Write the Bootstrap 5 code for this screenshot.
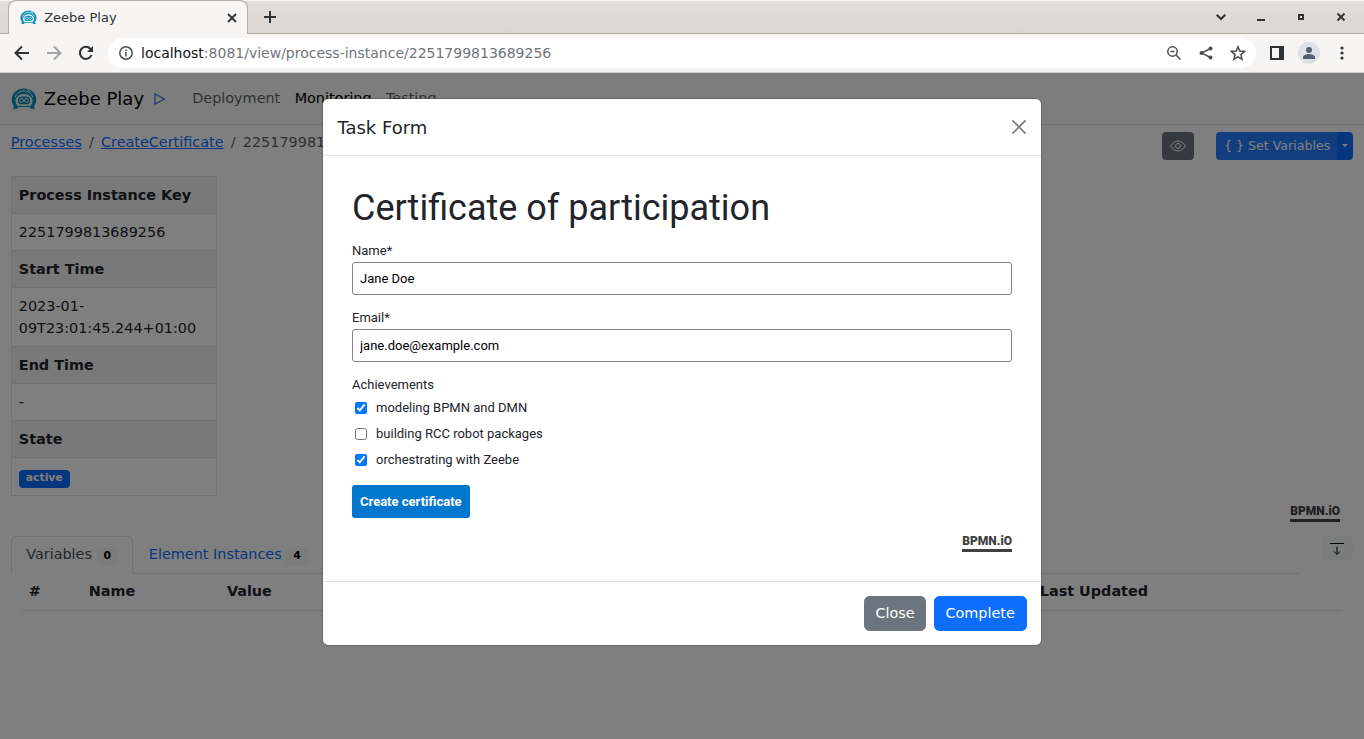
<!DOCTYPE html>
<html lang="en">
<head>
<meta charset="utf-8">
<meta name="viewport" content="width=device-width, initial-scale=1">
<title>Zeebe Play</title>
<link href="https://cdn.jsdelivr.net/npm/bootstrap@5.3.0/dist/css/bootstrap.min.css" rel="stylesheet">
<style>
  html { font-size: 90%; }
  body { font-family: "DejaVu Sans", sans-serif; min-height: 100vh; display: flex; flex-direction: column; }
  svg { display: block; flex: none; }
  .bare { border: 0; background: none; padding: 0; color: inherit; }

  /* browser frame */
  .tabstrip { height: 34px; background: linear-gradient(#e1dedb, #dad6d2); border-top: 1px solid #f6f5f4; border-bottom: 1px solid #b0aca8; padding: 0 18px 0 8px; color: #2e3436; }
  .tabitem { width: 240px; height: 34px; background: #f6f5f4; border: 1px solid #b0aca8; border-bottom: 0; border-radius: 8px 8px 0 0; padding: 0 10px 0 11px; font-size: 13px; }
  .new-tab { margin-left: 16px; }
  .window-tools { gap: 30px; }
  .toolbar { height: 39px; background: #f6f5f4; border-bottom: 1px solid #d5cfca; padding: 0 14px; gap: 14px; color: #2e3436; }
  .history-tools { gap: 16px; }
  .omnibox { height: 30px; background: #fff; border-radius: 15px; padding: 0 10px 0 11px; gap: 16px; color: #4a4d4f; }
  .address { font-size: 14px; color: #70757a; margin-left: -8px; }
  .address span { color: #111; }
  .person { width: 22px; height: 22px; border-radius: 50%; background: #dee1e6; color: #565e72; }

  /* application */
  .page-area { position: relative; flex: 1; overflow: hidden; }
  .navbar-play { height: 52px; padding: 0; background: #f8fbf9; border-bottom: 1px solid #dee2e6; }
  .navbar-brand { gap: 7px; }
  .facts { line-height: 22px; }
  .facts th, .facts td { padding: 7px; }
  .facts th { background: #f2f2f2; }
  .badge { --bs-badge-border-radius: 4px; }
  .set-vars { background: #257bff; border-color: #257bff; padding-left: 7px; padding-right: 7px; }
  .set-vars + .btn { padding-left: 4px; padding-right: 4px; }
  .badge-soft { background: #f6fbf9; color: #000; }
  .page-tabs { margin-right: 54px; }
  .page-tabs .nav-link.active { color: #495057; }
  .bpmn { font: 900 12px/16px "Roboto", sans-serif; color: #404040; border-bottom: 3px solid #404040; text-decoration: none; }
  .bpmn:hover { color: #000; }
  .canvas-logo { padding-right: 24px; }
  .instance-row { height: 376px; padding-top: 16px; }
  .layer { position: absolute; inset: 0; background: rgba(0, 0, 0, .5); }
  .modal-task { position: absolute; }
  .modal-task .modal-dialog { max-width: 720px; }
  .modal-task .modal-content { border-radius: 6px; }

  /* form */
  .task-form { font-family: "Roboto", sans-serif; font-size: 13px; color: #22242a; padding: 30px 29px 29px; }
  .task-form h1 { font-size: 36px; font-weight: 400; line-height: 44px; margin: 0 0 12px; }
  .task-form label, .task-form legend { display: block; font-size: 13px; line-height: 18px; margin: 0; }
  .task-form input[type=text], .task-form input[type=email] { display: block; width: 100%; height: 33px; border: 1px solid #80828f; border-radius: 3px; padding: 0 7px; color: #000; margin: 2px 0 14px; }
  .task-form input[type=checkbox] { width: 12px; height: 12px; margin: 0; }
  .task-form legend { padding-bottom: 1px; }
  .tick { height: 26px; padding-left: 3px; gap: 9px; }
  .submit { background: #0277d0; color: #fff; border: 0; border-radius: 3px; height: 33px; padding: 0 8px; margin: 12px 0 15px; font-weight: 700; }
</style>
</head>
<body>
<svg width="0" height="0" class="position-absolute" aria-hidden="true">
  <symbol id="robot" viewBox="0 0 26 22">
    <path fill="#0f8fb8" d="M3 18C-.5 13.500-.2 7.500 4.500 3.500 9-.6 17-.6 21.500 3.500 26.200 7.500 26.500 13.500 23 18l1 3H2z"/>
    <path fill="none" stroke="#e8f6fa" stroke-width="1" d="M4 9.500C5.500 5 9 3 13 3s7.500 2 9 6.500M16.500 1.500l3 2.500"/>
    <path fill="#e8f6fa" d="M4.500 12.500C5 8.500 8.500 6 13 6s8 2.500 8.500 6.500c.2 2-1 4.500-2.500 5.500H7c-1.500-1-2.700-3.500-2.500-5.500z"/>
    <rect x="6.800" y="8.500" width="12.400" height="7.800" rx="3.900" fill="#0f8fb8"/>
    <path fill="none" stroke="#e8f6fa" stroke-width=".9" d="M8.400 12.400a2 2 0 104 0 2 2 0 10-4 0M13.600 12.400a2 2 0 104 0 2 2 0 10-4 0M12.400 12.400h1.200"/>
    <path fill="#e8f6fa" d="M5.500 21l2-2h11l2 2z"/>
  </symbol>
</svg>

<header>
  <div class="tabstrip d-flex align-items-center">
    <div class="tabitem d-flex align-items-center">
      <svg width="17" height="15"><use href="#robot"/></svg>
      <span class="ms-2 flex-grow-1">Zeebe Play</span>
      <button class="bare" aria-label="Close tab"><svg width="10" height="10" viewBox="0 0 10 10" stroke="currentColor" stroke-width="1.800"><path d="M1 1l8 8M9 1l-8 8"/></svg></button>
    </div>
    <button class="bare new-tab me-auto" aria-label="New tab"><svg width="12" height="12" viewBox="0 0 12 12" stroke="currentColor" stroke-width="2"><path d="M6 0v12M0 6h12"/></svg></button>
    <div class="window-tools d-flex align-items-center">
      <button class="bare" aria-label="Search tabs"><svg width="10" height="10" viewBox="0 0 10 10" fill="none" stroke="currentColor" stroke-width="2"><path d="M.700 2.700L5 7l4.300-4.300"/></svg></button>
      <button class="bare" aria-label="Minimize"><svg width="10" height="10" viewBox="0 0 10 10"><path d="M1 7h8v2H1z" fill="currentColor"/></svg></button>
      <button class="bare" aria-label="Maximize"><svg width="10" height="10" viewBox="0 0 10 10" fill="none" stroke="currentColor" stroke-width="2"><path d="M3 3h4v4H3z"/></svg></button>
      <button class="bare" aria-label="Close window"><svg width="10" height="10" viewBox="0 0 10 10" stroke="currentColor" stroke-width="2"><path d="M1.500 1.500l7 7M8.500 1.500l-7 7"/></svg></button>
    </div>
  </div>
  <div class="toolbar d-flex align-items-center">
    <div class="history-tools d-flex">
      <button class="bare" aria-label="Back"><svg width="16" height="16" viewBox="0 0 16 16" fill="none" stroke="currentColor" stroke-width="2"><path d="M15 8H2M8 1.500L1.500 8 8 14.500"/></svg></button>
      <button class="bare" aria-label="Forward" disabled><svg width="16" height="16" viewBox="0 0 16 16" fill="none" stroke="#a3a6a6" stroke-width="2"><path d="M1 8h13M8 1.500L14.500 8 8 14.500"/></svg></button>
      <button class="bare" aria-label="Reload"><svg width="16" height="16" viewBox="0 0 16 16" fill="none" stroke="currentColor" stroke-width="2"><path d="M13.500 10A6 6 0 1112.300 3.800L14 5.500"/><path d="M15 1v6H9z" fill="currentColor" stroke="none"/></svg></button>
    </div>
    <div class="omnibox d-flex align-items-center flex-grow-1">
      <svg width="14" height="14" viewBox="0 0 14 14" fill="none" stroke="currentColor" stroke-width="1.500"><circle cx="7" cy="7" r="6.200"/><path d="M7 6v4.500M7 3.500V5"/></svg>
      <a class="address text-decoration-none me-auto" href="#"><span>localhost</span>:8081/view/process-instance/2251799813689256</a>
      <button class="bare" aria-label="Zoom"><svg width="16" height="16" viewBox="0 0 16 16" fill="none" stroke="currentColor" stroke-width="1.500"><circle cx="6.500" cy="6.500" r="4.700"/><path d="M10 10l4.500 4.500M4.500 6.500h4"/></svg></button>
      <button class="bare" aria-label="Share"><svg width="16" height="16" viewBox="0 0 16 16" fill="currentColor"><circle cx="12.500" cy="3.500" r="2"/><circle cx="3.500" cy="8" r="2"/><circle cx="12.500" cy="12.500" r="2"/><path d="M12.500 3.500L3.500 8l9 4.500" fill="none" stroke="currentColor" stroke-width="1.400"/></svg></button>
      <button class="bare" aria-label="Bookmark"><svg width="16" height="16" viewBox="0 0 16 16" fill="none" stroke="currentColor" stroke-width="1.500"><path d="M8 1.800l1.800 4.300 4.700.4-3.600 3.100 1.100 4.600L8 11.800l-4 2.400 1.100-4.600L1.500 6.500l4.700-.4z"/></svg></button>
    </div>
    <button class="bare" aria-label="Side panel"><svg width="14" height="14" viewBox="0 0 14 14"><path fill="currentColor" fill-rule="evenodd" d="M0 0h14v14H0zM2 2v10h7V2z"/></svg></button>
    <button class="bare person" aria-label="Profile"><svg width="22" height="22" viewBox="0 0 22 22" fill="currentColor"><circle cx="11" cy="8" r="3"/><path d="M5 17v-2c0-2 4-3 6-3s6 1 6 3v2z"/></svg></button>
    <button class="bare" aria-label="Menu"><svg width="16" height="14" viewBox="0 0 16 14" fill="currentColor"><circle cx="8" cy="2" r="1.600"/><circle cx="8" cy="7" r="1.600"/><circle cx="8" cy="12" r="1.600"/></svg></button>
  </div>
</header>

<div class="page-area">
  <nav class="navbar navbar-expand navbar-play">
    <div class="container-fluid">
      <a class="navbar-brand d-flex align-items-center" href="#">
        <svg width="26" height="22"><use href="#robot"/></svg>
        <span>Zeebe Play</span>
        <svg width="16" height="14" viewBox="0 0 16 14" fill="none" stroke="#4169e1" stroke-width="1.200"><path d="M4 2v10l9.500-5z"/></svg>
      </a>
      <ul class="navbar-nav me-auto ms-1">
        <li class="nav-item"><a class="nav-link" href="#">Deployment</a></li>
        <li class="nav-item"><a class="nav-link active" href="#">Monitoring</a></li>
        <li class="nav-item"><a class="nav-link" href="#">Testing</a></li>
      </ul>
    </div>
  </nav>

  <main class="container-fluid">
    <div class="d-flex justify-content-between pt-2">
      <nav aria-label="breadcrumb">
        <ol class="breadcrumb mb-0">
          <li class="breadcrumb-item"><a href="#">Processes</a></li>
          <li class="breadcrumb-item"><a href="#">CreateCertificate</a></li>
          <li class="breadcrumb-item active">2251799813689256</li>
        </ol>
      </nav>
      <div class="d-flex">
        <button class="btn btn-sm btn-secondary me-4" aria-label="Show"><svg width="16" height="16" viewBox="0 0 16 16" fill="none" stroke="currentColor"><path d="M.5 8C3 4.500 5.500 3 8 3s5 1.500 7.500 5C13 11.500 10.500 13 8 13S3 11.500.5 8z"/><circle cx="8" cy="8" r="2.500"/></svg></button>
        <div class="btn-group">
          <button class="btn btn-sm btn-primary set-vars">{ } Set Variables</button>
          <button class="btn btn-sm btn-primary dropdown-toggle dropdown-toggle-split" aria-label="More"></button>
        </div>
      </div>
    </div>

    <div class="row instance-row">
      <div class="col-2">
        <table class="table table-bordered facts">
          <tbody>
            <tr><th>Process Instance Key</th></tr>
            <tr><td>2251799813689256</td></tr>
            <tr><th>Start Time</th></tr>
            <tr><td>2023-01-09T23:01:45.244+01:00</td></tr>
            <tr><th>End Time</th></tr>
            <tr><td>-</td></tr>
            <tr><th>State</th></tr>
            <tr><td><span class="badge text-bg-primary">active</span></td></tr>
          </tbody>
        </table>
      </div>
      <div class="col-10 d-flex align-items-end justify-content-end canvas-logo">
        <a class="bpmn mb-3" href="#">BPMN.iO</a>
      </div>
    </div>

    <div class="position-relative">
      <ul class="nav nav-tabs page-tabs">
        <li class="nav-item"><a class="nav-link active" href="#">Variables <span class="badge badge-soft">0</span></a></li>
        <li class="nav-item"><a class="nav-link" href="#">Element Instances <span class="badge badge-soft">4</span></a></li>
      </ul>
      <button class="btn btn-sm badge-soft position-absolute top-0 end-0" aria-label="Scroll down"><svg width="16" height="16" viewBox="0 0 16 16" fill="none" stroke="currentColor"><path d="M1 2.500h14M8 5.500V13M5 10.500l3 3 3-3"/></svg></button>
    </div>
    <div class="px-2 mx-1">
      <table class="table">
        <colgroup><col style="width:4%"><col style="width:11%"><col style="width:61%"><col></colgroup>
        <thead><tr><th>#</th><th class="ps-3">Name</th><th>Value</th><th class="ps-3">Last Updated</th></tr></thead>
      </table>
    </div>
  </main>

  <div class="layer"></div>
  <div class="modal modal-task d-block" role="dialog" aria-labelledby="taskTitle">
    <div class="modal-dialog">
      <div class="modal-content">
        <div class="modal-header">
          <h5 class="modal-title" id="taskTitle">Task Form</h5>
          <button class="btn-close" aria-label="Close"></button>
        </div>
        <form class="modal-body task-form">
          <h1>Certificate of participation</h1>
          <label for="name">Name*</label>
          <input type="text" id="name" value="Jane Doe">
          <label for="email">Email*</label>
          <input type="email" id="email" value="jane.doe@example.com">
          <fieldset>
            <legend>Achievements</legend>
            <div class="tick d-flex align-items-center"><input type="checkbox" id="a1" checked><label for="a1">modeling BPMN and DMN</label></div>
            <div class="tick d-flex align-items-center"><input type="checkbox" id="a2"><label for="a2">building RCC robot packages</label></div>
            <div class="tick d-flex align-items-center"><input type="checkbox" id="a3" checked><label for="a3">orchestrating with Zeebe</label></div>
          </fieldset>
          <button class="submit" type="button">Create certificate</button>
          <div class="d-flex justify-content-end"><a class="bpmn" href="#">BPMN.iO</a></div>
        </form>
        <div class="modal-footer">
          <button class="btn btn-secondary">Close</button>
          <button class="btn btn-primary">Complete</button>
        </div>
      </div>
    </div>
  </div>
</div>
<script src="https://cdn.jsdelivr.net/npm/bootstrap@5.3.0/dist/js/bootstrap.bundle.min.js"></script>
</body>
</html>
